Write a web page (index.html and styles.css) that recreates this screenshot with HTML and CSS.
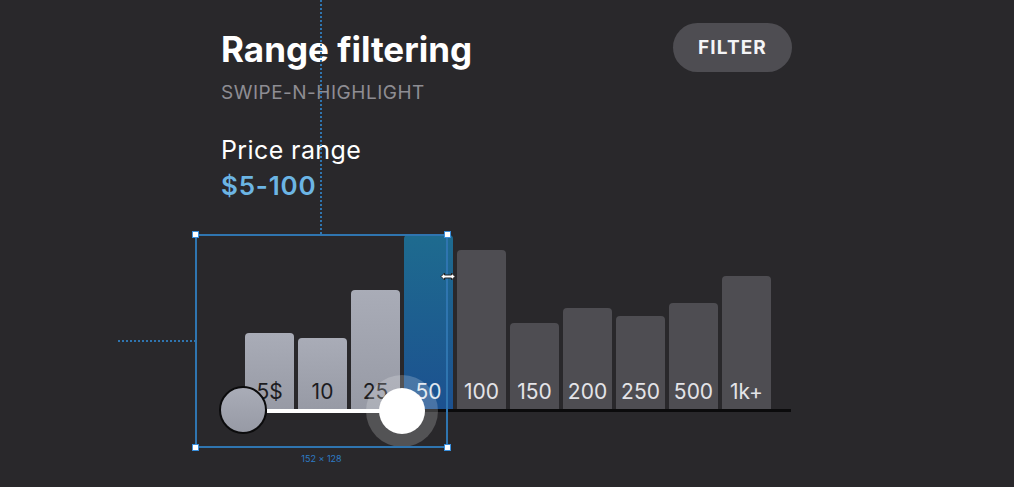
FILE: index.html
```html
<!DOCTYPE html>
<html lang="en">
<head>
    <meta charset="UTF-8">
    <meta name="viewport" content="width=device-width, initial-scale=1.0">
    <title>Range filtering</title>
    <link rel="stylesheet" href="styles.css">
</head>
<body>
    <div class="screen">
        <div class="top">
            <div class="heading">
                <h1 class="title">Range filtering</h1>
                <div class="subtitle">SWIPE-N-HIGHLIGHT</div>
            </div>
            <button class="filter-btn">FILTER</button>
        </div>

        <div class="price-label">Price range</div>
        <div class="price-value">$5-100</div>

        <div class="chart-area">
            <div class="chart">
                <div class="bar in-range" style="height: 76px;"><span>5$</span></div>
                <div class="bar in-range" style="height: 71px;"><span>10</span></div>
                <div class="bar in-range" style="height: 119px;"><span>25</span></div>
                <div class="bar active" style="height: 174px;"><span>50</span></div>
                <div class="bar" style="height: 159px;"><span>100</span></div>
                <div class="bar" style="height: 86px;"><span>150</span></div>
                <div class="bar" style="height: 101px;"><span>200</span></div>
                <div class="bar" style="height: 93px;"><span>250</span></div>
                <div class="bar" style="height: 106px;"><span>500</span></div>
                <div class="bar" style="height: 133px;"><span>1k+</span></div>
            </div>

            <!-- range slider drawn over the bars -->
            <div class="track"></div>
            <div class="knob-min"></div>
            <div class="halo"></div>
            <div class="knob-max"></div>

            <!-- design tool selection overlay -->
            <div class="guide-v"></div>
            <div class="guide-h"></div>
            <div class="selection">
                <span class="handle tl"></span>
                <span class="handle tr"></span>
                <span class="handle bl"></span>
                <span class="handle br"></span>
                <div class="size-label">152 × 128</div>
            </div>
            <svg class="cursor" width="16" height="9" viewBox="0 0 16 9">
                <path d="M1 4.5 L4.5 1 L4.5 3 L11.5 3 L11.5 1 L15 4.5 L11.5 8 L11.5 6 L4.5 6 L4.5 8 Z" fill="#ffffff" stroke="#222" stroke-width="1" stroke-linejoin="round"/>
            </svg>
        </div>
    </div>
</body>
</html>
```

FILE: styles.css
```css
body {
    margin: 0;
    background-color: #29282b;
    font-family: Inter, "Noto Sans", sans-serif;
    color: white;
    height: 100vh;
    overflow: hidden;
}

.screen {
    width: 571px;
    margin-left: 221px;
    padding-top: 29px;
}

.top {
    display: flex;
    justify-content: space-between;
    align-items: flex-start;
}

.title {
    margin: 0;
    font-size: 35px;
    line-height: 40px;
    font-weight: 700;
    letter-spacing: 0;
}

.subtitle {
    margin-top: 12px;
    font-size: 19px;
    line-height: 24px;
    color: #8e8d93;
    letter-spacing: 0.5px;
}

.filter-btn {
    margin-top: -6px;
    width: 119px;
    height: 49px;
    border: none;
    border-radius: 25px;
    background-color: #4e4d52;
    color: #f4f4f6;
    font-family: Inter, "Noto Sans", sans-serif;
    font-size: 19px;
    font-weight: 700;
    letter-spacing: 1.1px;
    display: flex;
    justify-content: center;
    align-items: center;
    cursor: pointer;
}

.price-label {
    margin-top: 30px;
    font-size: 25px;
    line-height: 30px;
    letter-spacing: 0.4px;
}

.price-value {
    margin-top: 6px;
    font-size: 26px;
    line-height: 30px;
    font-weight: 600;
    letter-spacing: 0.8px;
    color: #6cb5e4;
}

.chart-area {
    position: relative;
    margin-top: 34px;
}

.chart {
    display: flex;
    align-items: flex-end;
    gap: 4px;
    height: 174px;
    width: 546px;
    margin-left: 24px;
    border-bottom: 3px solid #0b0b0c;
}

.bar {
    width: 49px;
    border-radius: 4px 4px 0 0;
    background-color: #4e4d52;
    display: flex;
    justify-content: center;
    align-items: flex-end;
    box-sizing: border-box;
    padding-bottom: 7px;
    font-size: 21px;
    line-height: 21px;
    color: #e4e4e8;
}

.bar.in-range {
    background: linear-gradient(to bottom, #a9acb7, #979aa5);
    color: #1c1c1f;
}

.bar.active {
    background: linear-gradient(to bottom, #1e6b8f, #1c5190);
    color: #dfe6ee;
}

.track {
    position: absolute;
    left: 46px;
    top: 174px;
    width: 134px;
    height: 4px;
    background-color: #ffffff;
}

.knob-min {
    position: absolute;
    left: -2px;
    top: 151px;
    width: 48px;
    height: 48px;
    box-sizing: border-box;
    border: 2px solid #0b0b0c;
    border-radius: 50%;
    background: linear-gradient(to bottom, #a9acb7, #979aa5);
}

.halo {
    position: absolute;
    left: 145px;
    top: 140px;
    width: 72px;
    height: 72px;
    border-radius: 50%;
    background-color: rgba(255, 255, 255, 0.2);
}

.knob-max {
    position: absolute;
    left: 158px;
    top: 153px;
    width: 46px;
    height: 46px;
    border-radius: 50%;
    background-color: #ffffff;
}

.guide-v {
    position: absolute;
    left: 99px;
    top: -235px;
    width: 2px;
    height: 235px;
    background: repeating-linear-gradient(to bottom, #2f75b0 0 2px, transparent 2px 4px);
}

.guide-h {
    position: absolute;
    left: -103px;
    top: 105px;
    width: 77px;
    height: 2px;
    background: repeating-linear-gradient(to right, #2f75b0 0 2px, transparent 2px 4px);
}

.selection {
    position: absolute;
    left: -26px;
    top: -1px;
    width: 253px;
    height: 214px;
    box-sizing: border-box;
    border: 2px solid #2f75b0;
}

.handle {
    position: absolute;
    width: 5px;
    height: 5px;
    background-color: #ffffff;
    border: 1px solid #3a8fdc;
}

.handle.tl { left: -5px; top: -5px; }
.handle.tr { right: -5px; top: -5px; }
.handle.bl { left: -5px; bottom: -5px; }
.handle.br { right: -5px; bottom: -5px; }

.size-label {
    position: absolute;
    left: 0;
    right: 0;
    top: 217px;
    text-align: center;
    font-size: 9px;
    color: #2e7cc6;
}

.cursor {
    position: absolute;
    left: 219px;
    top: 37px;
}
```
